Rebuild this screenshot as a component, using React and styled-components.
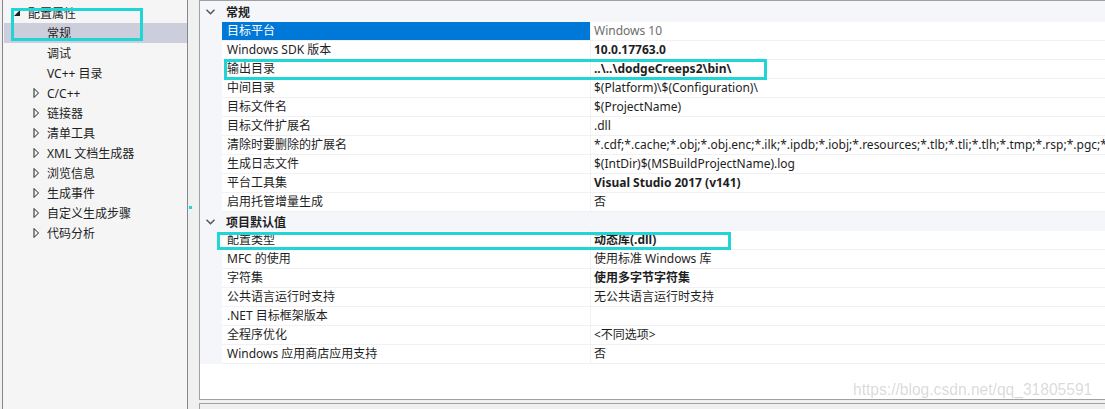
import styled, { createGlobalStyle } from "styled-components";

const GlobalStyle = createGlobalStyle`
  html, body {
    margin: 0;
    padding: 0;
    background: #f0f0f0;
  }
  body {
    font-family: "Noto Sans", "Noto Sans CJK SC", sans-serif;
    font-size: 12px;
    color: #1e1e1e;
  }
`;

const Page = styled.div`
  position: relative;
  display: flex;
  height: 409px;
  overflow: hidden;
`;

const Tree = styled.div`
  box-sizing: border-box;
  flex-shrink: 0;
  width: 186px;
  height: 420px;
  margin-left: 2px;
  padding-top: 3px;
  background: #f5f5f5;
  border-left: 1px solid #828790;
  border-right: 1px solid #828790;
`;

const TreeRow = styled.div`
  display: flex;
  align-items: center;
  height: 20px;
  margin-left: 1px;
  padding-left: ${({ $level }) => 10 + $level * 19}px;
  background: ${({ $selected }) => ($selected ? "#cccedb" : "transparent")};
  white-space: nowrap;
`;

const Toggle = styled.span`
  display: flex;
  align-items: center;
  width: 14px;
  height: 20px;
  flex-shrink: 0;
`;

const RightSide = styled.div`
  flex: 1;
  min-width: 0;
  display: flex;
  flex-direction: column;
  gap: 3px;
  margin-left: 11px;
`;

const Grid = styled.div`
  box-sizing: border-box;
  height: 400px;
  background: #fff;
  border-top: 1px solid #a0a0a0;
  border-left: 1px solid #a0a0a0;
  border-bottom: 1px solid #a0a0a0;
`;

const Category = styled.div`
  display: flex;
  align-items: center;
  height: ${({ $first }) => ($first ? 21 : 19)}px;
  padding-top: ${({ $first }) => ($first ? 1 : 0)}px;
  box-sizing: border-box;
  background: #f4f6fa;
  font-weight: 700;
`;

const Chevron = styled.span`
  display: flex;
  width: 26px;
  padding-left: 6px;
  box-sizing: border-box;
`;

const Row = styled.div`
  display: flex;
  height: 19px;
`;

const Gutter = styled.div`
  width: 22px;
  flex-shrink: 0;
  background: #f4f6fa;
`;

const NameCell = styled.div`
  box-sizing: border-box;
  width: 369px;
  flex-shrink: 0;
  padding-left: 5px;
  line-height: 18px;
  border-bottom: 1px solid #f0f1f4;
  border-right: 1px solid #f0f1f4;
  background: ${({ $selected }) => ($selected ? "#0078d7" : "transparent")};
  color: ${({ $selected }) => ($selected ? "#fff" : "inherit")};
  white-space: nowrap;
`;

const ValueCell = styled.div`
  flex: 1;
  min-width: 0;
  padding-left: 3px;
  line-height: 18px;
  border-bottom: 1px solid #f0f1f4;
  white-space: nowrap;
  overflow: hidden;
  font-weight: ${({ $bold }) => ($bold ? 700 : 400)};
  color: ${({ $dim }) => ($dim ? "#6d6d6d" : "inherit")};
`;

const Desc = styled.div`
  flex: 1;
  background: #f0f0f0;
  border-top: 1px solid #a0a0a0;
  border-left: 1px solid #a0a0a0;
`;

const Mark = styled.div`
  position: absolute;
  box-sizing: border-box;
  border: 3px solid #1fd5d5;
`;

const Dot = styled.div`
  position: absolute;
  left: 189px;
  top: 206px;
  width: 3px;
  height: 3px;
  background: #1fd5d5;
`;

const Watermark = styled.div`
  position: absolute;
  left: 853px;
  top: 381px;
  font-family: "Liberation Sans", Arial, sans-serif;
  font-size: 15.6px;
  color: rgba(120, 120, 120, 0.28);
  white-space: nowrap;
`;

const Expanded = () => (
  <svg width="7" height="7" viewBox="0 0 7 7">
    <polygon points="6,0 6,6 0,6" fill="#1e1e1e" />
  </svg>
);

const Collapsed = () => (
  <svg width="7" height="10" viewBox="0 0 7 10">
    <polygon points="1,0.5 5.5,5 1,9.5" fill="none" stroke="#1e1e1e" strokeWidth="1" />
  </svg>
);

const Down = () => (
  <svg width="9" height="6" viewBox="0 0 9 6">
    <polyline points="0.5,0.8 4.5,4.8 8.5,0.8" fill="none" stroke="#555" strokeWidth="1.5" />
  </svg>
);

const tree = [
  { label: "配置属性", level: 0, icon: "open" },
  { label: "常规", level: 1, selected: true },
  { label: "调试", level: 1 },
  { label: "VC++ 目录", level: 1 },
  { label: "C/C++", level: 1, icon: "closed" },
  { label: "链接器", level: 1, icon: "closed" },
  { label: "清单工具", level: 1, icon: "closed" },
  { label: "XML 文档生成器", level: 1, icon: "closed" },
  { label: "浏览信息", level: 1, icon: "closed" },
  { label: "生成事件", level: 1, icon: "closed" },
  { label: "自定义生成步骤", level: 1, icon: "closed" },
  { label: "代码分析", level: 1, icon: "closed" },
];

const groups = [
  {
    title: "常规",
    rows: [
      { name: "目标平台", value: "Windows 10", selected: true, dim: true },
      { name: "Windows SDK 版本", value: "10.0.17763.0", bold: true },
      { name: "输出目录", value: "..\\..\\dodgeCreeps2\\bin\\", bold: true },
      { name: "中间目录", value: "$(Platform)\\$(Configuration)\\" },
      { name: "目标文件名", value: "$(ProjectName)" },
      { name: "目标文件扩展名", value: ".dll" },
      {
        name: "清除时要删除的扩展名",
        value:
          "*.cdf;*.cache;*.obj;*.obj.enc;*.ilk;*.ipdb;*.iobj;*.resources;*.tlb;*.tli;*.tlh;*.tmp;*.rsp;*.pgc;*.pgd;*.meta;*.tlog;*.manifest;*.res;*.pch;*.exp;*.idb;*.rep;*.xdc;*.pdb",
      },
      { name: "生成日志文件", value: "$(IntDir)$(MSBuildProjectName).log" },
      { name: "平台工具集", value: "Visual Studio 2017 (v141)", bold: true },
      { name: "启用托管增量生成", value: "否" },
    ],
  },
  {
    title: "项目默认值",
    rows: [
      { name: "配置类型", value: "动态库(.dll)", bold: true },
      { name: "MFC 的使用", value: "使用标准 Windows 库" },
      { name: "字符集", value: "使用多字节字符集", bold: true },
      { name: "公共语言运行时支持", value: "无公共语言运行时支持" },
      { name: ".NET 目标框架版本", value: "" },
      { name: "全程序优化", value: "<不同选项>" },
      { name: "Windows 应用商店应用支持", value: "否" },
    ],
  },
];

export default function App() {
  return (
    <>
      <GlobalStyle />
      <Page>
        <Tree>
          {tree.map((item) => (
            <TreeRow key={item.label} $level={item.level} $selected={item.selected}>
              <Toggle>
                {item.icon === "open" && <Expanded />}
                {item.icon === "closed" && <Collapsed />}
              </Toggle>
              {item.label}
            </TreeRow>
          ))}
        </Tree>

        <RightSide>
          <Grid>
            {groups.map((group, gi) => (
              <div key={group.title}>
                <Category $first={gi === 0}>
                  <Chevron>
                    <Down />
                  </Chevron>
                  {group.title}
                </Category>
                {group.rows.map((row) => (
                  <Row key={row.name}>
                    <Gutter />
                    <NameCell $selected={row.selected}>{row.name}</NameCell>
                    <ValueCell $bold={row.bold} $dim={row.dim}>
                      {row.value}
                    </ValueCell>
                  </Row>
                ))}
              </div>
            ))}
          </Grid>
          <Desc />
        </RightSide>

        <Mark style={{ left: 11, top: 8, width: 132, height: 33 }} />
        <Mark style={{ left: 224, top: 59, width: 543, height: 21 }} />
        <Mark style={{ left: 217, top: 232, width: 514, height: 18 }} />
        <Dot />
        <Watermark>https://blog.csdn.net/qq_31805591</Watermark>
      </Page>
    </>
  );
}
